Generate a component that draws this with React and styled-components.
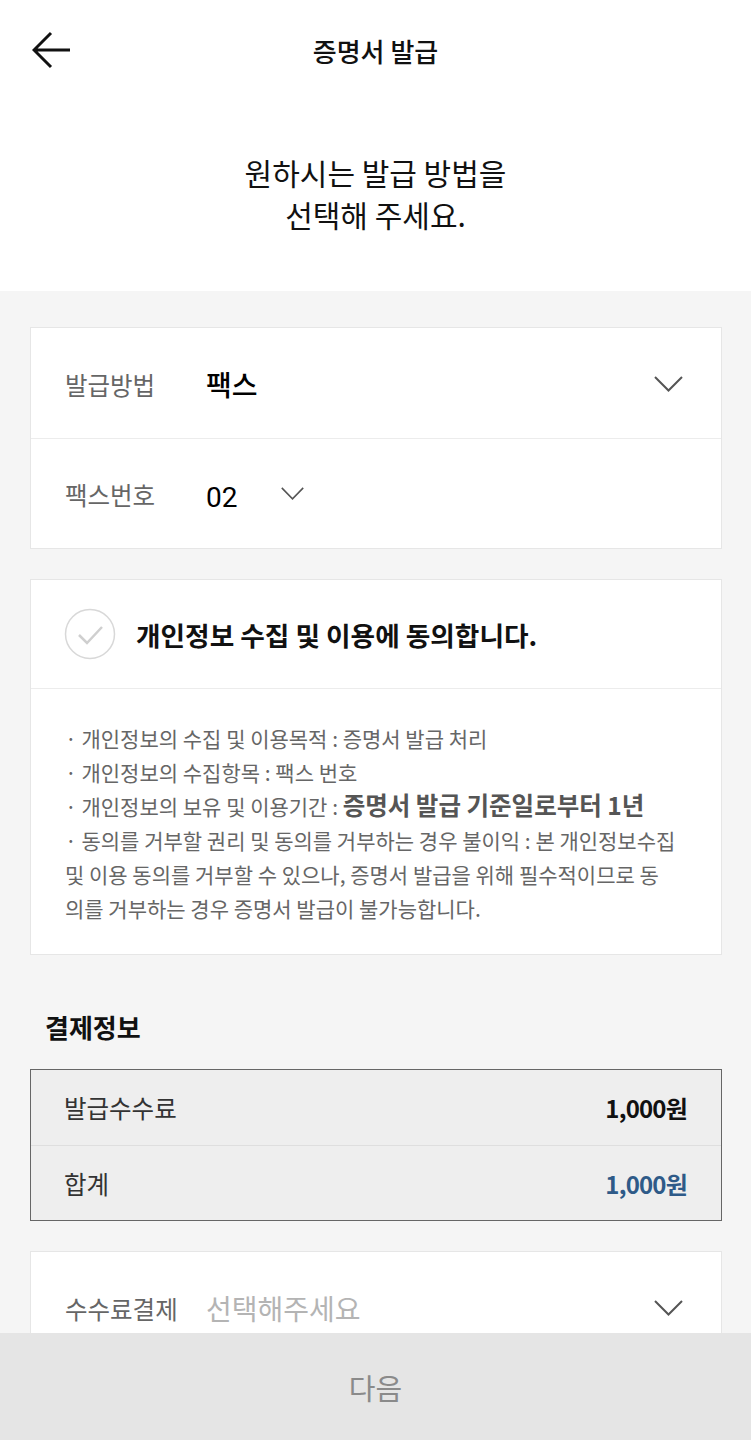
import React from "react";
import styled, { createGlobalStyle } from "styled-components";

const GlobalStyle = createGlobalStyle`
  html, body {
    margin: 0;
    padding: 0;
    background: #f5f5f5;
  }
  body {
    font-family: "Noto Sans CJK KR", "Noto Sans", sans-serif;
    color: #111;
  }
  * {
    box-sizing: border-box;
  }
`;

const BackIcon = () => (
  <svg width="40" height="40" viewBox="0 0 40 40">
    <path
      d="M19 2 L2 19 L19 36 M2 19 L38 19"
      fill="none"
      stroke="#111"
      strokeWidth="3"
      strokeLinecap="butt"
      strokeLinejoin="miter"
    />
  </svg>
);

const Chevron = ({ small }) => (
  <svg
    width={small ? 23 : 29}
    height={small ? 13 : 16}
    viewBox="0 0 29 16"
    preserveAspectRatio="none"
  >
    <path d="M1 1 L14.5 14.5 L28 1" fill="none" stroke="#555" strokeWidth="2" />
  </svg>
);

const CheckCircle = () => (
  <svg width="52" height="52" viewBox="0 0 52 52">
    <circle cx="26" cy="26" r="24.5" fill="#fff" stroke="#d8d8d8" strokeWidth="1.5" />
    <path d="M15 27 L23 35 L38 19" fill="none" stroke="#cfcfcf" strokeWidth="2.5" />
  </svg>
);

const App = () => {
  return (
    <>
      <GlobalStyle />
      <Page>
        <Top>
          <Header>
            <BackButton>
              <BackIcon />
            </BackButton>
            <Title>증명서 발급</Title>
            <span />
          </Header>
          <Heading>
            원하시는 발급 방법을
            <br />
            선택해 주세요.
          </Heading>
        </Top>

        <Body>
          <Card>
            <SelectRow>
              <Label>발급방법</Label>
              <Value>팩스</Value>
              <Spacer />
              <Chevron />
            </SelectRow>
            <SelectRow divided>
              <Label>팩스번호</Label>
              <Number>02</Number>
              <SmallChevron>
                <Chevron small />
              </SmallChevron>
            </SelectRow>
          </Card>

          <Card $gap>
            <ConsentRow>
              <CheckCircle />
              <ConsentText>개인정보 수집 및 이용에 동의합니다.</ConsentText>
            </ConsentRow>
            <Notes>
              <Line>· 개인정보의 수집 및 이용목적 : 증명서 발급 처리</Line>
              <Line>· 개인정보의 수집항목 : 팩스 번호</Line>
              <Line>
                · 개인정보의 보유 및 이용기간 : <Strong>증명서 발급 기준일로부터 1년</Strong>
              </Line>
              <Line>· 동의를 거부할 권리 및 동의를 거부하는 경우 불이익 : 본 개인정보수집</Line>
              <Line>및 이용 동의를 거부할 수 있으나, 증명서 발급을 위해 필수적이므로 동</Line>
              <Line>의를 거부하는 경우 증명서 발급이 불가능합니다.</Line>
            </Notes>
          </Card>

          <SectionTitle>결제정보</SectionTitle>
          <PayTable>
            <PayRow>
              <PayLabel>발급수수료</PayLabel>
              <Amount>1,000원</Amount>
            </PayRow>
            <PayRow divided>
              <PayLabel>합계</PayLabel>
              <Amount total>1,000원</Amount>
            </PayRow>
          </PayTable>

          <Card $gap>
            <SelectRow>
              <Label>수수료결제</Label>
              <Placeholder>선택해주세요</Placeholder>
              <Spacer />
              <Chevron />
            </SelectRow>
          </Card>
          <Filler />
        </Body>

        <NextBar>다음</NextBar>
      </Page>
    </>
  );
};

const Page = styled.div`
  width: 100%;
  min-height: 1440px;
  background: #f5f5f5;
`;

const Top = styled.div`
  background: #fff;
  height: 291px;
`;

const Header = styled.div`
  height: 100px;
  display: grid;
  grid-template-columns: 1fr auto 1fr;
  align-items: center;
  padding: 0 32px;
`;

const BackButton = styled.div`
  display: flex;
  align-items: center;
  margin-top: 1px;
`;

const Title = styled.div`
  font-size: 26px;
  font-weight: 500;
  color: #111;
`;

const Heading = styled.div`
  text-align: center;
  font-size: 30px;
  line-height: 42px;
  color: #111;
  padding-top: 51px;
`;

const Body = styled.div`
  padding: 36px 29px 0 30px;
`;

const Card = styled.div`
  background: #fff;
  border: 1px solid #e6e6e6;
  margin-top: ${(p) => (p.$gap ? "30px" : "0")};
`;

const SelectRow = styled.div`
  height: 110px;
  display: flex;
  align-items: center;
  padding: 2px 38px 0 34px;
  border-top: ${(p) => (p.divided ? "1px solid #ececec" : "none")};
`;

const Label = styled.div`
  width: 141px;
  flex-shrink: 0;
  font-size: 24.5px;
  color: #666;
`;

const Value = styled.div`
  font-size: 28px;
  font-weight: 500;
  color: #000;
`;

const Number = styled.div`
  font-size: 28px;
  color: #000;
  margin-top: 6px;
  font-family: "Roboto", "Noto Sans", sans-serif;
`;

const SmallChevron = styled.div`
  display: flex;
  margin-left: 44px;
  margin-bottom: 2px;
`;

const Placeholder = styled.div`
  font-size: 28px;
  color: #b4b4b4;
`;

const Spacer = styled.div`
  flex: 1;
`;

const ConsentRow = styled.div`
  height: 109px;
  display: flex;
  align-items: center;
  gap: 20px;
  padding-left: 33px;
  border-bottom: 1px solid #ececec;
`;

const ConsentText = styled.div`
  font-size: 26.7px;
  font-weight: 700;
  color: #111;
`;

const Notes = styled.div`
  padding: 32px 20px 29px 34px;
  font-size: 21px;
  line-height: 34px;
  color: #666;
`;

const Line = styled.div`
  white-space: nowrap;
`;

const Strong = styled.span`
  font-size: 24.5px;
  font-weight: 700;
  color: #555;
  line-height: 1;
`;

const SectionTitle = styled.div`
  font-size: 26px;
  font-weight: 700;
  line-height: 34px;
  color: #111;
  padding-left: 15px;
  margin: 55px 0 25px;
`;

const PayTable = styled.div`
  background: #eeeeee;
  border: 1.5px solid #666;
`;

const PayRow = styled.div`
  height: 75px;
  display: flex;
  align-items: center;
  justify-content: space-between;
  padding: 0 34px 0 33px;
  border-top: ${(p) => (p.divided ? "1px solid #dedede" : "none")};
`;

const PayLabel = styled.div`
  font-size: 24.5px;
  color: #333;
`;

const Amount = styled.div`
  font-size: 24px;
  font-weight: 700;
  letter-spacing: -0.8px;
  color: ${(p) => (p.total ? "#2e5a88" : "#111")};
`;

const Filler = styled.div`
  height: 120px;
`;

const NextBar = styled.div`
  position: fixed;
  left: 0;
  right: 0;
  bottom: 0;
  height: 107px;
  background: #e5e5e5;
  display: flex;
  align-items: center;
  justify-content: center;
  font-size: 29px;
  color: #8a8a8a;
`;

export default App;
